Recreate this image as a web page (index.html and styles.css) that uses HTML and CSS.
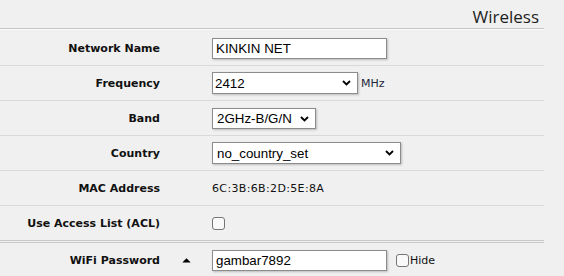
FILE: index.html
```html
<!DOCTYPE html>
<html>
<head>
<meta charset="utf-8">
<link rel="stylesheet" href="styles.css">
</head>
<body>
<div class="panel">
  <div class="header">Wireless</div>
  <div class="rows">
    <div class="row">
      <div class="label">Network Name</div>
      <div class="mid"></div>
      <div class="ctrl"><input class="text" type="text" value="KINKIN NET"></div>
    </div>
    <div class="row">
      <div class="label">Frequency</div>
      <div class="mid"></div>
      <div class="ctrl">
        <span class="sel sel-freq"><select><option>2412</option></select><svg class="chev" width="9" height="6" viewBox="0 0 9 6"><polyline points="1,1 4.5,4.5 8,1" fill="none" stroke="#000" stroke-width="1.8"/></svg></span>
        <span class="unit">MHz</span>
      </div>
    </div>
    <div class="row">
      <div class="label">Band</div>
      <div class="mid"></div>
      <div class="ctrl">
        <span class="sel sel-band"><select><option>2GHz-B/G/N</option></select><svg class="chev" width="9" height="6" viewBox="0 0 9 6"><polyline points="1,1 4.5,4.5 8,1" fill="none" stroke="#000" stroke-width="1.8"/></svg></span>
      </div>
    </div>
    <div class="row">
      <div class="label">Country</div>
      <div class="mid"></div>
      <div class="ctrl">
        <span class="sel sel-country"><select><option>no_country_set</option></select><svg class="chev" width="9" height="6" viewBox="0 0 9 6"><polyline points="1,1 4.5,4.5 8,1" fill="none" stroke="#000" stroke-width="1.8"/></svg></span>
      </div>
    </div>
    <div class="row">
      <div class="label">MAC Address</div>
      <div class="mid"></div>
      <div class="ctrl"><span class="value">6C:3B:6B:2D:5E:8A</span></div>
    </div>
    <div class="row row-split">
      <div class="label">Use Access List (ACL)</div>
      <div class="mid"></div>
      <div class="ctrl"><input class="check" type="checkbox"></div>
    </div>
    <div class="row row-last">
      <div class="label">WiFi Password</div>
      <div class="mid"><svg width="9" height="5" viewBox="0 0 9 5"><polygon points="0.3,4.6 4.5,0.3 8.7,4.6" fill="#000"/></svg></div>
      <div class="ctrl">
        <input class="text" type="text" value="gambar7892">
        <label class="hide"><input class="check" type="checkbox"><span>Hide</span></label>
      </div>
    </div>
  </div>
</div>
</body>
</html>
```

FILE: styles.css
```css
html, body {
  margin: 0;
  padding: 0;
  background: #f0f0f0;
}

.panel {
  width: 544px;
  font-family: "DejaVu Sans", Verdana, sans-serif;
  color: #111;
}

.header {
  box-sizing: border-box;
  height: 29px;
  padding: 5px 5px 0 0;
  text-align: right;
  font-family: "Open Sans", "Noto Sans", sans-serif;
  font-size: 17px;
  line-height: 23px;
  color: #1e1e1e;
  border-bottom: 1px solid #c6c6c6;
  box-shadow: 0 1px 0 #fbfbfb;
}

.rows {
  margin-top: 2px;
}

.row {
  display: grid;
  grid-template-columns: 160px 52px 1fr;
  align-items: center;
  height: 34px;
  border-bottom: 1px solid #d9d9d9;
}

.row-split {
  border-bottom: 3px double #c8c8c8;
}

.row-last {
  border-bottom: none;
}

.label {
  text-align: right;
  font-weight: bold;
  font-size: 11px;
  line-height: 13px;
  color: #111;
  white-space: nowrap;
}

.mid {
  display: flex;
  justify-content: center;
  align-items: center;
  padding-left: 1px;
}

.mid svg {
  display: block;
}

.ctrl {
  display: flex;
  align-items: center;
}

.text {
  box-sizing: border-box;
  width: 175px;
  height: 21px;
  margin: 0;
  padding: 0 2px 0 3px;
  border: 1px solid #8c8c8c;
  background: #fff;
  font-family: "Liberation Sans", Arial, sans-serif;
  font-size: 13.33px;
  color: #000;
  box-shadow: 1px 1px 2px rgba(0, 0, 0, 0.22);
  outline: none;
}

.sel {
  position: relative;
  display: inline-block;
}

.sel select {
  display: block;
  box-sizing: border-box;
  height: 22px;
  margin: 0;
  padding: 0 18px 0 2px;
  border: 1px solid #8c8c8c;
  border-radius: 0;
  background: #fff;
  -webkit-appearance: none;
  appearance: none;
  font-family: "Liberation Sans", Arial, sans-serif;
  font-size: 13.33px;
  color: #000;
  box-shadow: 1px 1px 2px rgba(0, 0, 0, 0.22);
  outline: none;
}

.sel-freq select { width: 146px; }
.sel-band select { width: 104px; padding-left: 4px; height: 21px; }
.sel-country select { width: 189px; padding-left: 4px; }

.chev {
  position: absolute;
  right: 7px;
  top: 8px;
  pointer-events: none;
}

.sel-band .chev { top: 8px; }

.unit {
  margin-left: 3px;
  font-size: 11px;
  color: #1c2636;
}

.value {
  font-size: 11px;
  letter-spacing: 0.35px;
  color: #111;
}

.check {
  -webkit-appearance: none;
  appearance: none;
  box-sizing: border-box;
  width: 13px;
  height: 13px;
  margin: 0;
  border: 1px solid #767676;
  border-radius: 3px;
  background: #f9f9f9;
}

.hide {
  display: flex;
  align-items: center;
  margin-left: 9px;
  font-size: 11px;
  color: #111;
}

.hide span {
  margin-left: 1px;
}
```
